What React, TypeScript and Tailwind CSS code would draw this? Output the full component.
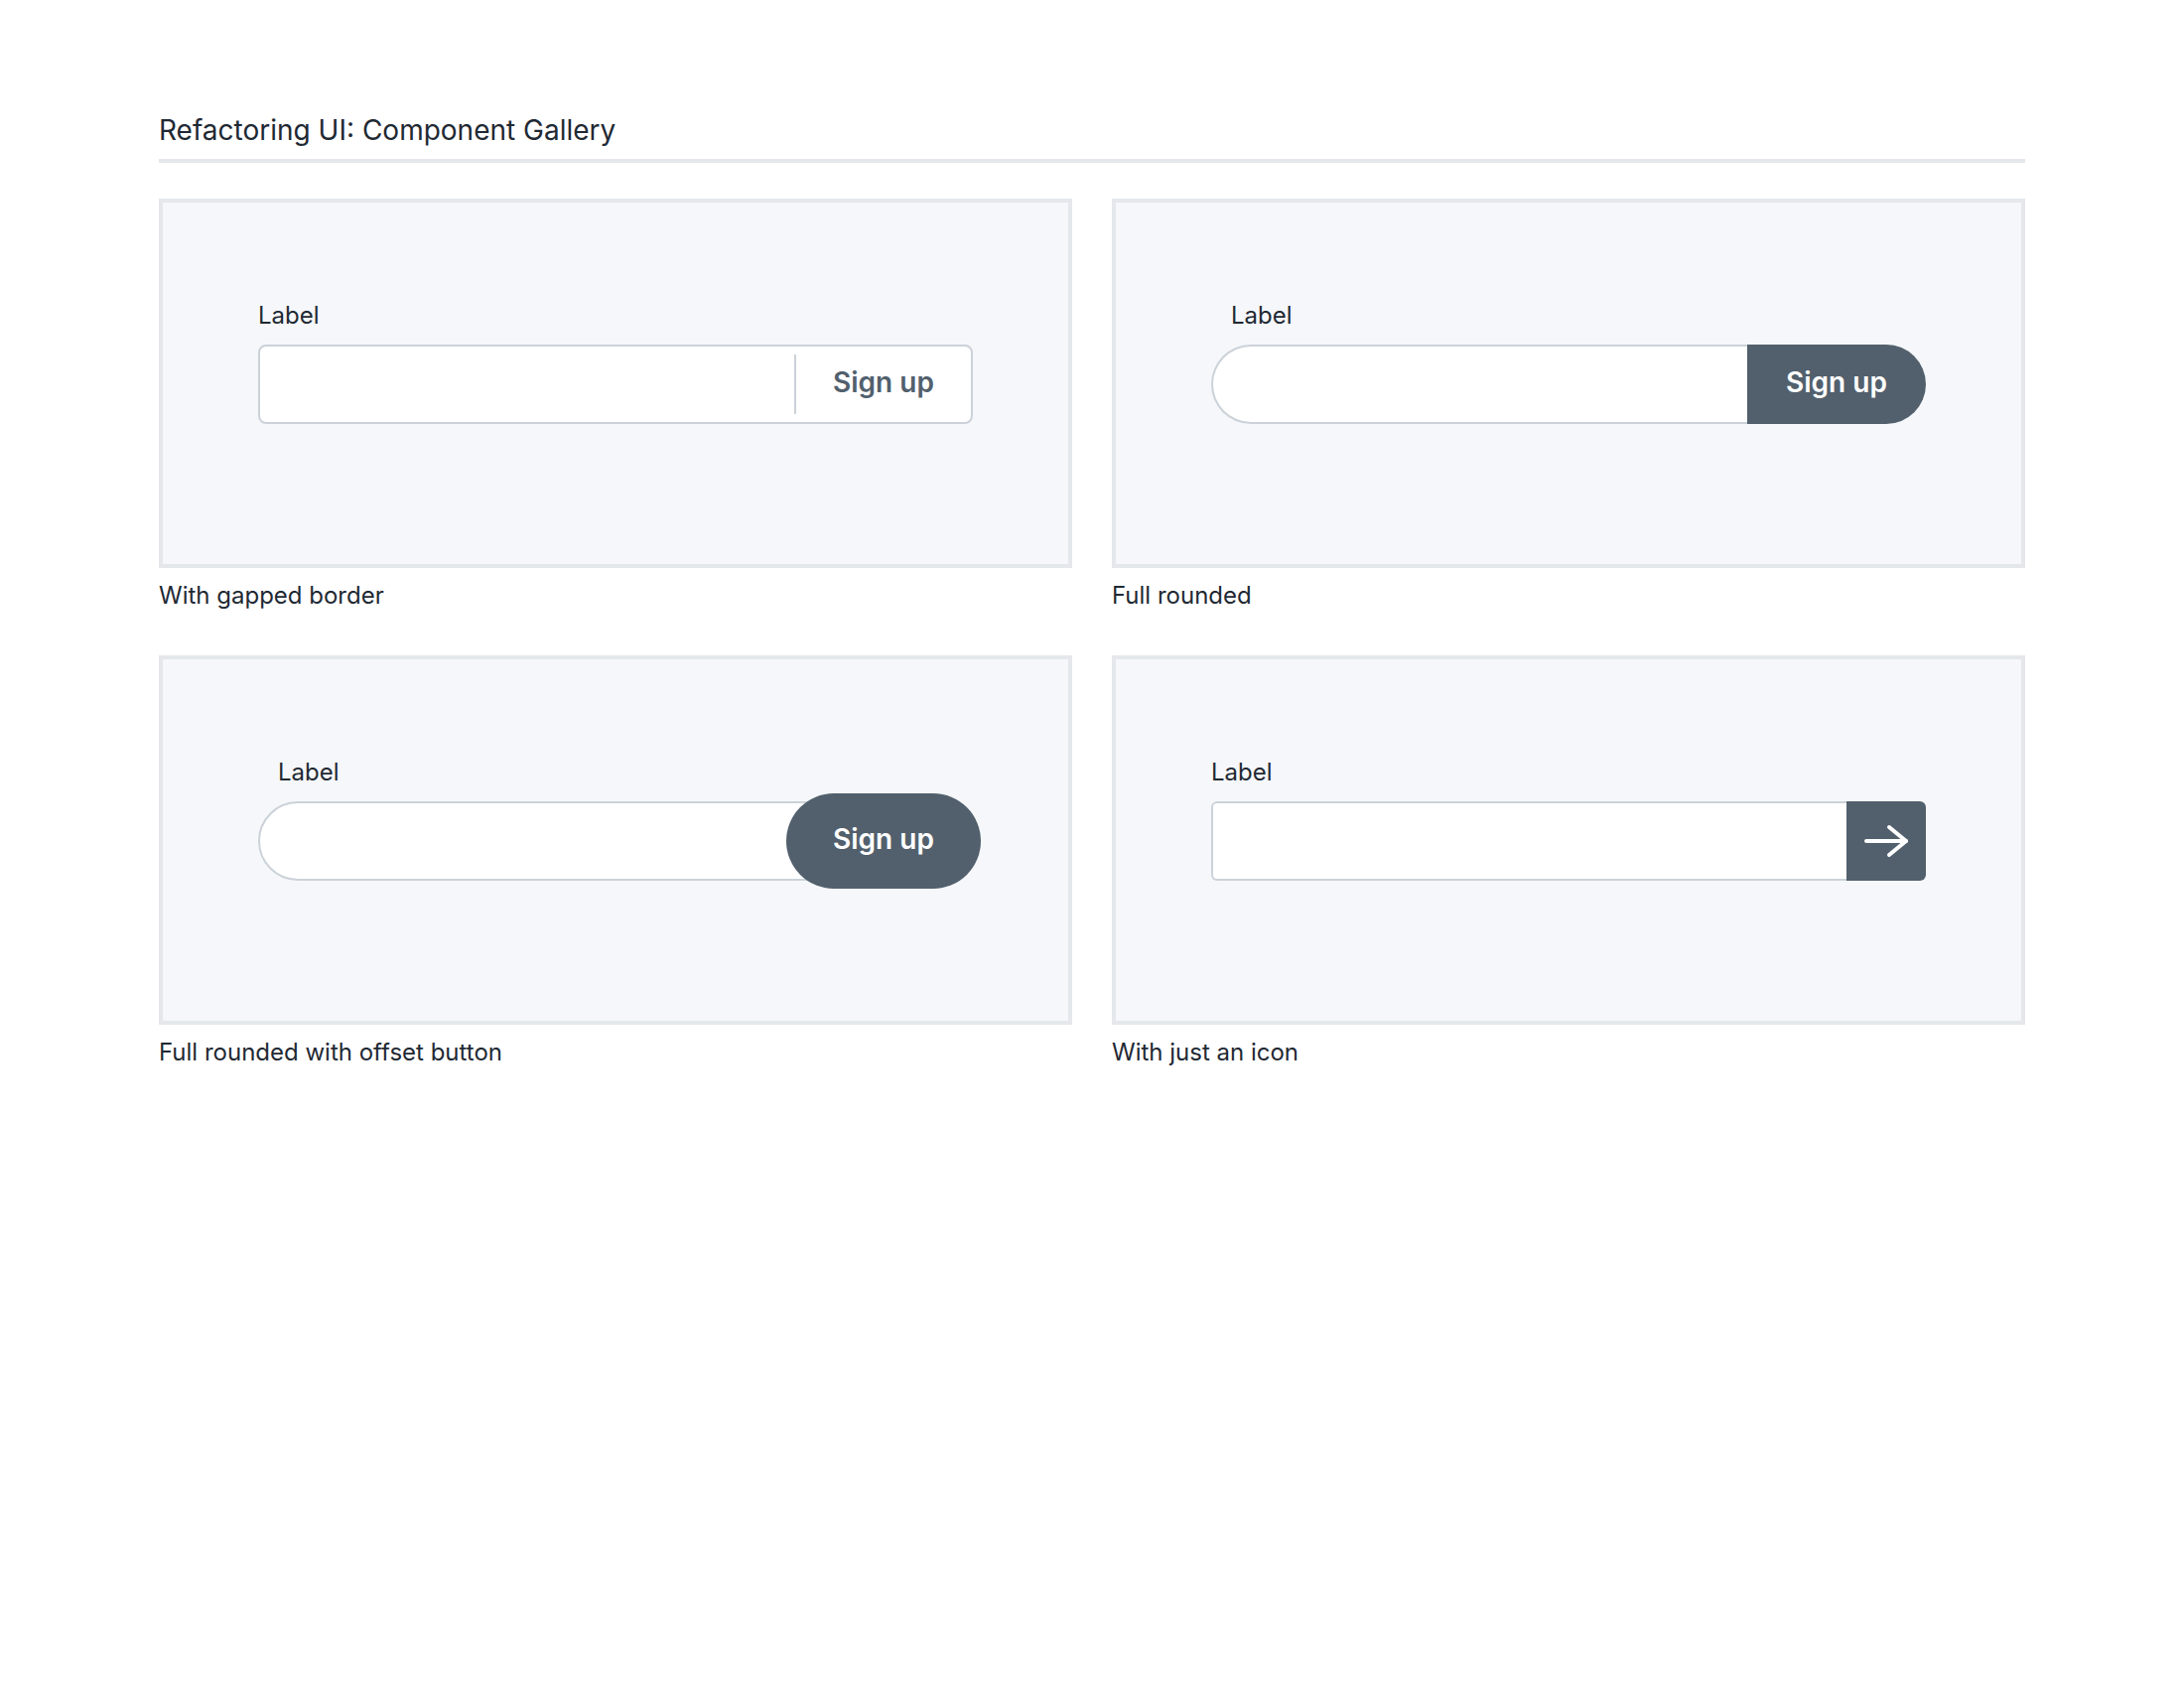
import React from "react"

const font = { fontFamily: "Inter, 'Liberation Sans', sans-serif" }

function ArrowIcon() {
  return (
    <svg width="48" height="36" viewBox="0 0 48 36" fill="none" stroke="currentColor" strokeWidth="4" strokeLinecap="round" strokeLinejoin="round">
      <path d="M4 18H44" />
      <path d="M27 4L44 18L27 32" />
    </svg>
  )
}

function Card({ caption, children }: { caption: string; children: React.ReactNode }) {
  return (
    <div>
      <div className="h-[372px] border-4 border-[#e4e7eb] bg-[#f5f7fa] px-[96px] pt-[98px]">{children}</div>
      <div className="mt-3 text-[24px] leading-8 text-[#1f2933]">{caption}</div>
    </div>
  )
}

function FieldLabel({ indent, children }: { indent?: boolean; children: React.ReactNode }) {
  return <div className={`mb-[13px] text-[24px] leading-8 text-[#1f2933] ${indent ? "pl-5" : ""}`}>{children}</div>
}

export default function App() {
  return (
    <div className="min-h-[1700px] bg-white pl-[160px] pt-[113px]" style={font}>
      <div className="w-[1880px]">
        <h1 className="text-[28px] leading-9 text-[#1f2933]">Refactoring UI: Component Gallery</h1>
        <div className="mt-[11px] h-1 bg-[#e4e7eb]" />

        <div className="mt-9 grid grid-cols-2 gap-x-10 gap-y-11">
          <Card caption="With gapped border">
            <FieldLabel>Label</FieldLabel>
            <div className="flex h-20 items-stretch rounded-lg border-2 border-[#cbd2d9] bg-white">
              <div className="flex-1" />
              <div className="my-2 w-0.5 bg-[#cbd2d9]" />
              <button className="flex w-[176px] items-center justify-center pb-1 text-[28px] font-semibold text-[#52606d]">Sign up</button>
            </div>
          </Card>

          <Card caption="Full rounded">
            <FieldLabel indent>Label</FieldLabel>
            <div className="flex h-20 items-stretch">
              <div className="flex-1 rounded-l-full border-2 border-r-0 border-[#cbd2d9] bg-white" />
              <button className="w-[180px] rounded-r-full bg-[#52606d] pb-1 text-[28px] font-semibold text-white">Sign up</button>
            </div>
          </Card>

          <Card caption="Full rounded with offset button">
            <FieldLabel indent>Label</FieldLabel>
            <div className="relative h-20">
              <div className="h-20 rounded-full border-2 border-[#cbd2d9] bg-white" />
              <button className="absolute -right-2 -top-2 h-24 w-[196px] rounded-full bg-[#52606d] pb-1 text-[28px] font-semibold text-white">
                Sign up
              </button>
            </div>
          </Card>

          <Card caption="With just an icon">
            <FieldLabel>Label</FieldLabel>
            <div className="flex h-20 items-stretch">
              <div className="flex-1 rounded-l-md border-2 border-r-0 border-[#cbd2d9] bg-white" />
              <button className="flex w-20 items-center justify-center rounded-r-md bg-[#52606d] text-white">
                <ArrowIcon />
              </button>
            </div>
          </Card>
        </div>
      </div>
    </div>
  )
}
